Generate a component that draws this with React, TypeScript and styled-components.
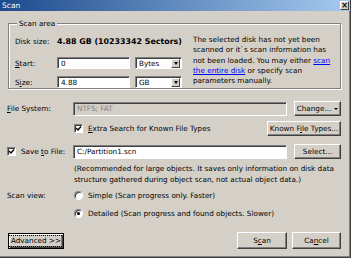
import { createGlobalStyle, styled } from "styled-components";

const GlobalStyle = createGlobalStyle`
  html, body {
    margin: 0;
    padding: 0;
    background: #d4d0c8;
  }
  body {
    font-family: "DejaVu Sans", Verdana, sans-serif;
    font-size: 7.25px;
    color: #000;
  }
  * {
    box-sizing: border-box;
  }
`;

const Window = styled.div`
  width: 351px;
  height: 258px;
  background: #d4d0c8;
  display: flex;
  flex-direction: column;
  border-right: 1px solid #404040;
  border-bottom: 1px solid #404040;
  box-shadow: inset -1px -1px 0 #808080;
  overflow: hidden;
`;

const TitleBar = styled.div`
  height: 11px;
  display: flex;
  align-items: center;
  justify-content: space-between;
  padding: 0 1px 0 2px;
  background: linear-gradient(to right, #1c4a8c, #a6caf0);
  color: #fff;
  font-size: 7.5px;
`;

const CloseBox = styled.div`
  width: 9px;
  height: 9px;
  background: #d4d0c8;
  border: 1px solid;
  border-color: #fff #404040 #404040 #fff;
  display: flex;
  align-items: center;
  justify-content: center;
  color: #000;
  font-size: 8px;
  font-weight: bold;
  line-height: 1;
`;

const Body = styled.div`
  flex: 1;
  display: flex;
  flex-direction: column;
  padding: 8px 9px 0 7px;
`;

const GroupBox = styled.fieldset`
  margin: 0 0 0 1px;
  padding: 8px 2px 0 6px;
  height: 70px;
  border: 1px solid #808080;
  box-shadow: inset 1px 1px 0 #fff, 1px 1px 0 #fff;
  min-width: 0;
`;

const Legend = styled.legend`
  padding: 0 2px;
  margin-left: 2px;
  line-height: 9px;
  background: #d4d0c8;
  position: relative;
`;

const GroupInner = styled.div`
  display: flex;
  gap: 11px;
`;

const LeftCol = styled.div`
  width: 167px;
  display: flex;
  flex-direction: column;
`;

const Row = styled.div<{ $h: number; $mt?: number; $pl?: number }>`
  display: flex;
  align-items: center;
  height: ${(p) => p.$h}px;
  margin-top: ${(p) => p.$mt ?? 0}px;
  padding-left: ${(p) => p.$pl ?? 0}px;
  white-space: nowrap;
`;

const Label = styled.span<{ $w: number }>`
  width: ${(p) => p.$w}px;
  flex: none;
`;

const Strong = styled.span`
  font-weight: bold;
  font-size: 7.9px;
`;

const Sunken = styled.div<{ $w?: number; $h: number; $disabled?: boolean }>`
  ${(p) => (p.$w ? `width: ${p.$w}px; flex: none;` : "flex: 1;")}
  height: ${(p) => p.$h}px;
  background: ${(p) => (p.$disabled ? "#d4d0c8" : "#fff")};
  color: ${(p) => (p.$disabled ? "#808080" : "#000")};
  border: 1px solid;
  border-color: #808080 #fff #fff #808080;
  box-shadow: inset 1px 1px 0 #404040;
  display: flex;
  align-items: center;
  padding-left: 3px;
  position: relative;
`;

const DropArrow = styled.div`
  position: absolute;
  right: 1px;
  top: 1px;
  bottom: 0;
  width: 9px;
  background: #d4d0c8;
  border: 1px solid;
  border-color: #fff #404040 #404040 #fff;
  display: flex;
  align-items: center;
  justify-content: center;

  &::after {
    content: "";
    border-left: 2.5px solid transparent;
    border-right: 2.5px solid transparent;
    border-top: 3px solid #000;
  }
`;

const Info = styled.div`
  flex: 1;
  line-height: 10.3px;
  margin-top: -1px;
`;

const Link = styled.a`
  color: #0000ff;
  text-decoration: underline;
`;

const Button = styled.button<{ $w: number; $h?: number; $ml?: number }>`
  width: ${(p) => p.$w}px;
  height: ${(p) => p.$h ?? 15}px;
  margin-left: ${(p) => p.$ml ?? 0}px;
  flex: none;
  padding: 0;
  font: inherit;
  color: #000;
  background: #d4d0c8;
  border: 1px solid;
  border-color: #fff #404040 #404040 #fff;
  box-shadow: inset -1px -1px 0 #808080;
  display: flex;
  align-items: center;
  justify-content: center;
  white-space: pre;
`;

const DefaultButton = styled(Button)`
  border: 1px solid #000;
  box-shadow: inset 1px 1px 0 #fff, inset -1px -1px 0 #404040,
    inset -2px -2px 0 #808080;
`;

const Focus = styled.span`
  outline: 1px dotted #000;
  padding: 1px 2px;
  line-height: 8px;
`;

const SmallArrow = styled.span`
  margin-left: 3px;
  border-left: 2px solid transparent;
  border-right: 2px solid transparent;
  border-top: 2.5px solid #000;
`;

const Check = styled.span`
  width: 9px;
  height: 9px;
  flex: none;
  background: #fff;
  border: 1px solid;
  border-color: #808080 #fff #fff #808080;
  box-shadow: inset 1px 1px 0 #404040;
  display: flex;
  align-items: center;
  justify-content: center;
  margin-right: 5px;
`;

const Radio = styled.span<{ $on?: boolean }>`
  width: 9px;
  height: 9px;
  flex: none;
  border-radius: 50%;
  background: #fff;
  border: 1px solid;
  border-color: #808080 #fff #fff #808080;
  box-shadow: inset 1px 1px 0 #404040;
  margin-right: 5px;
  display: flex;
  align-items: center;
  justify-content: center;

  &::after {
    content: "";
    width: 3px;
    height: 3px;
    border-radius: 50%;
    background: ${(p) => (p.$on ? "#000" : "transparent")};
  }
`;

const Note = styled.div`
  padding-left: 67px;
  margin-top: 5px;
  line-height: 10.5px;
  white-space: nowrap;
`;

const Spacer = styled.div`
  flex: 1;
`;

function CheckMark() {
  return (
    <svg width="7" height="7" viewBox="0 0 7 7">
      <path d="M1 3 L3 5 L6 1.5" stroke="#000" strokeWidth="1.4" fill="none" />
    </svg>
  );
}

export default function App() {
  return (
    <>
      <GlobalStyle />
      <Window>
        <TitleBar>
          <span>Scan</span>
          <CloseBox>×</CloseBox>
        </TitleBar>
        <Body>
          <GroupBox>
            <Legend>Scan area</Legend>
            <GroupInner>
              <LeftCol>
                <Row $h={10}>
                  <Label $w={42}>Disk size:</Label>
                  <Strong>4.88 GB (10233342 Sectors)</Strong>
                </Row>
                <Row $h={12} $mt={11}>
                  <Label $w={42}>
                    <u>S</u>tart:
                  </Label>
                  <Sunken $w={73} $h={12}>0</Sunken>
                  <Spacer />
                  <Sunken $w={47} $h={12}>
                    Bytes
                    <DropArrow />
                  </Sunken>
                </Row>
                <Row $h={12} $mt={7}>
                  <Label $w={42}>
                    S<u>i</u>ze:
                  </Label>
                  <Sunken $w={73} $h={12}>4.88</Sunken>
                  <Spacer />
                  <Sunken $w={47} $h={12}>
                    GB
                    <DropArrow />
                  </Sunken>
                </Row>
              </LeftCol>
              <Info>
                The selected disk has not yet been
                <br />
                scanned or it`s scan information has
                <br />
                not been loaded. You may either <Link>scan</Link>
                <br />
                <Link>the entire disk</Link> or specify scan
                <br />
                parameters manually.
              </Info>
            </GroupInner>
          </GroupBox>

          <Row $h={15} $mt={12}>
            <Label $w={66}>
              <u>F</u>ile System:
            </Label>
            <Sunken $h={14} $disabled>
              NTFS; FAT
            </Sunken>
            <Button $w={47} $ml={7}>
              Change...
              <SmallArrow />
            </Button>
          </Row>

          <Row $h={15} $mt={5} $pl={67}>
            <Check>
              <CheckMark />
            </Check>
            <span>
              <u>E</u>xtra Search for Known File Types
            </span>
            <Spacer />
            <Button $w={74}>
              <span>
                Known F<u>i</u>le Types...
              </span>
            </Button>
          </Row>

          <Row $h={15} $mt={8}>
            <Check>
              <CheckMark />
            </Check>
            <Label $w={52}>
              Save <u>t</u>o File:
            </Label>
            <Sunken $h={14}>C:/Partition1.scn</Sunken>
            <Button $w={47} $ml={7}>
              Select...
            </Button>
          </Row>

          <Note>
            (Recommended for large objects. It saves only information on disk data
            <br />
            structure gathered during object scan, not actual object data.)
          </Note>

          <Row $h={10} $mt={5}>
            <Label $w={67}>Scan view:</Label>
            <Radio />
            <span>Simple (Scan progress only. Faster)</span>
          </Row>
          <Row $h={10} $mt={8} $pl={67}>
            <Radio $on />
            <span>Detailed (Scan progress and found objects. Slower)</span>
          </Row>

          <Row $h={17} $mt={14}>
            <DefaultButton $w={56} $h={16} $ml={1}>
              <Focus>Advanced &gt;&gt;</Focus>
            </DefaultButton>
            <Spacer />
            <Button $w={50} $h={17}>
              <span>
                S<u>c</u>an
              </span>
            </Button>
            <Button $w={49} $h={17} $ml={5}>
              <span>
                Ca<u>n</u>cel
              </span>
            </Button>
          </Row>
        </Body>
      </Window>
    </>
  );
}
